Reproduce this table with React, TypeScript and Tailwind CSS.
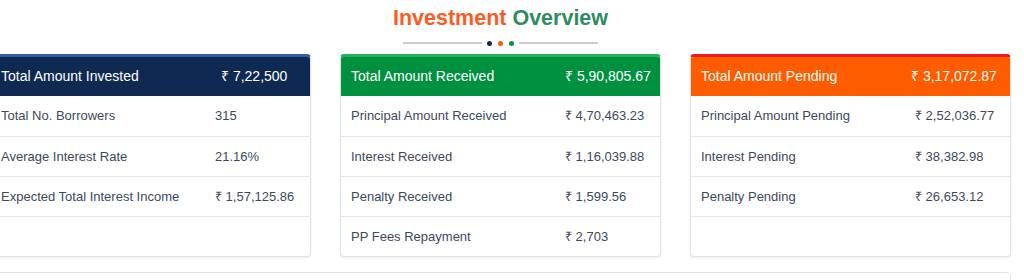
import React from "react";

type Row = { label: string; value: string };

type Card = {
    title: string;
    total: string;
    head: string;
    top: string;
    headValueX: string;
    rowValueX: string;
    rows: Row[];
};

const cards: Card[] = [
    {
        title: "Total Amount Invested",
        total: "₹ 7,22,500",
        head: "bg-[#0e2a52]",
        top: "border-t-[#2f5fa6]",
        headValueX: "grid-cols-[220px_1fr]",
        rowValueX: "grid-cols-[214px_1fr]",
        rows: [
            { label: "Total No. Borrowers", value: "315" },
            { label: "Average Interest Rate", value: "21.16%" },
            { label: "Expected Total Interest Income", value: "₹ 1,57,125.86" },
        ],
    },
    {
        title: "Total Amount Received",
        total: "₹ 5,90,805.67",
        head: "bg-[#00913f]",
        top: "border-t-[#1fb257]",
        headValueX: "grid-cols-[214px_1fr]",
        rowValueX: "grid-cols-[214px_1fr]",
        rows: [
            { label: "Principal Amount Received", value: "₹ 4,70,463.23" },
            { label: "Interest Received", value: "₹ 1,16,039.88" },
            { label: "Penalty Received", value: "₹ 1,599.56" },
            { label: "PP Fees Repayment", value: "₹ 2,703" },
        ],
    },
    {
        title: "Total Amount Pending",
        total: "₹ 3,17,072.87",
        head: "bg-[#ff5c00]",
        top: "border-t-[#ee1c1c]",
        headValueX: "grid-cols-[210px_1fr]",
        rowValueX: "grid-cols-[214px_1fr]",
        rows: [
            { label: "Principal Amount Pending", value: "₹ 2,52,036.77" },
            { label: "Interest Pending", value: "₹ 38,382.98" },
            { label: "Penalty Pending", value: "₹ 26,653.12" },
        ],
    },
];

function SummaryCard({ card }: { card: Card }) {
    const filler = 4 - card.rows.length;
    return (
        <div
            className={`w-[321px] rounded-[4px] border border-[#dfe4ea] border-t-[3px] ${card.top} bg-white shadow-[0_1px_3px_rgba(0,0,0,0.08)] overflow-hidden`}
        >
            <div
                className={`grid ${card.headValueX} items-center h-[39px] pl-[10px] ${card.head} text-white text-[14px]`}
            >
                <span>{card.title}</span>
                <span>{card.total}</span>
            </div>
            {card.rows.map((row, i) => (
                <div
                    key={i}
                    className={`grid ${card.rowValueX} items-center h-[40px] pl-[10px] text-[13px] text-[#3d4960] ${i > 0 ? "border-t border-[#e3e7ec]" : ""}`}
                >
                    <span>{row.label}</span>
                    <span>{row.value}</span>
                </div>
            ))}
            {Array.from({ length: filler }).map((_, i) => (
                <div key={"f" + i} className="h-[40px] border-t border-[#e3e7ec]" />
            ))}
        </div>
    );
}

export default function App() {
    return (
        <div
            className="w-[1024px] h-[280px] bg-white overflow-hidden"
            style={{ fontFamily: '"Liberation Sans", Arial, sans-serif' }}
        >
            <div className="ml-[-10px] w-[1021px]">
                <h2 className="pt-[6px] text-center text-[21.5px] font-bold leading-[24px]">
                    <span className="text-[#ff5a1f]">Investment</span>{" "}
                    <span className="text-[#2e8c62]">Overview</span>
                </h2>

                {/* divider */}
                <div className="flex items-center justify-center mt-[12px] h-[2px]">
                    <span className="w-[79px] h-[2px] bg-[#cbcbcb]" />
                    <div className="flex gap-[6px] mx-[5px]">
                        <span className="w-[5px] h-[5px] rounded-full bg-[#0e2a52]" />
                        <span className="w-[5px] h-[5px] rounded-full bg-[#ff5c00]" />
                        <span className="w-[5px] h-[5px] rounded-full bg-[#00913f]" />
                    </div>
                    <span className="w-[79px] h-[2px] bg-[#cbcbcb]" />
                </div>

                <div className="flex gap-[29px] mt-[10px]">
                    {cards.map((c, i) => (
                        <SummaryCard key={i} card={c} />
                    ))}
                </div>

                <div className="mt-[15px] h-[40px] rounded-[4px] border border-[#dfe4ea] bg-white" />
            </div>
        </div>
    );
}
